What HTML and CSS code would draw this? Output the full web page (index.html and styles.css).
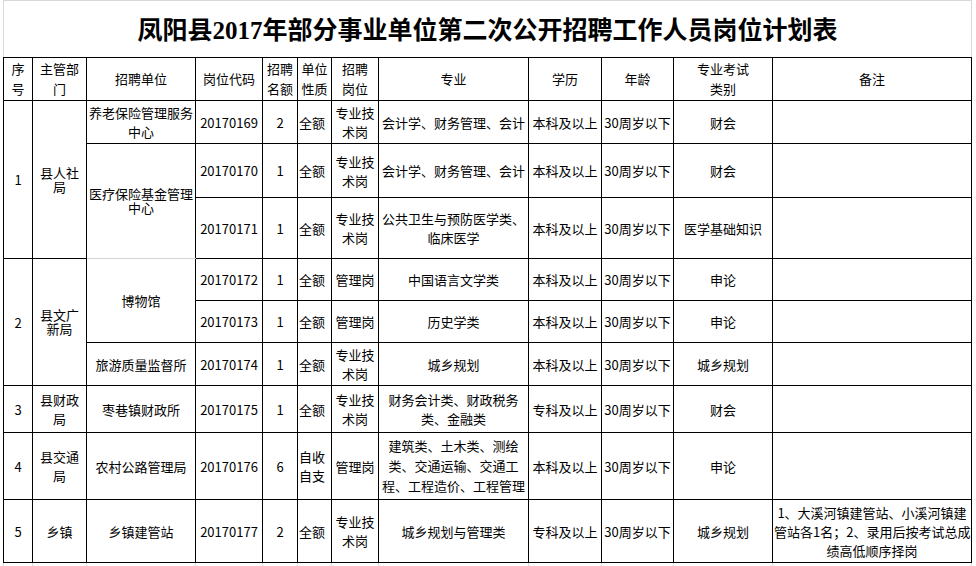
FILE: index.html
```html
<!DOCTYPE html>
<html lang="zh-CN">
<head>
<meta charset="utf-8">
<title>凤阳县2017年部分事业单位第二次公开招聘工作人员岗位计划表</title>
<link rel="stylesheet" href="styles.css">
</head>
<body>
<div class="sheet">
  <div class="title"><span class="title-text">凤阳县<span class="num">2017</span>年部分事业单位第二次公开招聘工作人员岗位计划表</span></div>
  <table class="plan">
    <colgroup>
      <col class="c1"><col class="c2"><col class="c3"><col class="c4"><col class="c5"><col class="c6">
      <col class="c7"><col class="c8"><col class="c9"><col class="c10"><col class="c11"><col class="c12">
    </colgroup>
    <tr class="h43 head">
      <td>序<br>号</td><td>主管部<br>门</td><td>招聘单位</td><td>岗位代码</td><td>招聘<br>名额</td><td>单位<br>性质</td>
      <td>招聘<br>岗位</td><td>专业</td><td>学历</td><td>年龄</td><td>专业考试<br>类别</td><td>备注</td>
    </tr>
    <tr class="h43">
      <td rowspan="3">1</td><td rowspan="3" class="tight">县人社<br>局</td><td>养老保险管理服务<br>中心</td>
      <td>20170169</td><td>2</td><td class="left">全额</td><td>专业技<br>术岗</td><td>会计学、财务管理、会计</td>
      <td>本科及以上</td><td>30周岁以下</td><td>财会</td><td></td>
    </tr>
    <tr class="h54">
      <td rowspan="2" class="tight soft-bottom">医疗保险基金管理<br>中心</td>
      <td>20170170</td><td>1</td><td class="left">全额</td><td>专业技<br>术岗</td><td>会计学、财务管理、会计</td>
      <td>本科及以上</td><td>30周岁以下</td><td>财会</td><td></td>
    </tr>
    <tr class="h61">
      <td>20170171</td><td>1</td><td class="left">全额</td><td>专业技<br>术岗</td><td>公共卫生与预防医学类、<br>临床医学</td>
      <td>本科及以上</td><td>30周岁以下</td><td>医学基础知识</td><td></td>
    </tr>
    <tr class="h42">
      <td rowspan="3">2</td><td rowspan="3" class="tight">县文广<br>新局</td><td rowspan="2">博物馆</td>
      <td>20170172</td><td>1</td><td class="left">全额</td><td>管理岗</td><td>中国语言文学类</td>
      <td>本科及以上</td><td>30周岁以下</td><td>申论</td><td></td>
    </tr>
    <tr class="h42">
      <td>20170173</td><td>1</td><td class="left">全额</td><td>管理岗</td><td>历史学类</td>
      <td>本科及以上</td><td>30周岁以下</td><td>申论</td><td></td>
    </tr>
    <tr class="h43">
      <td>旅游质量监督所</td>
      <td>20170174</td><td>1</td><td class="left">全额</td><td>专业技<br>术岗</td><td>城乡规划</td>
      <td>本科及以上</td><td>30周岁以下</td><td>城乡规划</td><td></td>
    </tr>
    <tr class="h47">
      <td>3</td><td>县财政<br>局</td><td>枣巷镇财政所</td>
      <td>20170175</td><td>1</td><td class="left">全额</td><td>专业技<br>术岗</td><td>财务会计类、财政税务<br>类、金融类</td>
      <td>专科及以上</td><td>30周岁以下</td><td>财会</td><td></td>
    </tr>
    <tr class="h67">
      <td>4</td><td>县交通<br>局</td><td>农村公路管理局</td>
      <td>20170176</td><td>6</td><td class="left">自收<br>自支</td><td>管理岗</td>
      <td class="multi">建筑类、土木类、测绘<br>类、交通运输、交通工<br>程、工程造价、工程管理</td>
      <td>本科及以上</td><td>30周岁以下</td><td>申论</td><td></td>
    </tr>
    <tr class="h63">
      <td>5</td><td>乡镇</td><td>乡镇建管站</td>
      <td>20170177</td><td>2</td><td class="left">全额</td><td>专业技<br>术岗</td><td>城乡规划与管理类</td>
      <td>专科及以上</td><td>30周岁以下</td><td>城乡规划</td>
      <td class="note">1、大溪河镇建管站、小溪河镇建<br>管站各1名；2、录用后按考试总成<br>绩高低顺序择岗</td>
    </tr>
    <tr class="ghost">
      <td></td><td></td><td></td><td></td><td></td><td></td><td></td><td></td><td></td><td></td><td></td><td></td>
    </tr>
  </table>
</div>
</body>
</html>
```

FILE: styles.css
```css
html, body {
  margin: 0;
  padding: 0;
  background: #ffffff;
}

body {
  font-family: "Noto Sans CJK SC", "Noto Sans", sans-serif;
  font-size: 13px;
  color: #000000;
}

.sheet {
  padding-left: 3px;
  width: 969px;
}

.title {
  box-sizing: border-box;
  width: 969px;
  height: 57px;
  border-top: 1px solid #d8d8d8;
  border-left: 1px solid #d8d8d8;
  border-right: 1px solid #d8d8d8;
  display: flex;
  align-items: center;
  justify-content: center;
}

.title-text {
  font-family: "Noto Sans CJK SC", sans-serif;
  font-weight: 700;
  font-size: 25px;
  line-height: 30px;
  padding-top: 1px;
}

.title-text .num {
  font-family: "Liberation Serif", serif;
  font-weight: 700;
}

.plan {
  border-collapse: collapse;
  table-layout: fixed;
  width: 969px;
}

.c1 { width: 29px; }
.c2 { width: 54px; }
.c3 { width: 109px; }
.c4 { width: 67px; }
.c5 { width: 35px; }
.c6 { width: 34px; }
.c7 { width: 47px; }
.c8 { width: 150px; }
.c9 { width: 73px; }
.c10 { width: 72px; }
.c11 { width: 99px; }
.c12 { width: 199px; }

.plan td {
  border: 1px solid #000000;
  padding: 0 1px;
  text-align: center;
  vertical-align: middle;
  line-height: 19px;
  white-space: nowrap;
  overflow: hidden;
}

.plan .head td {
  line-height: 20px;
}

.plan td.left {
  text-align: left;
  padding-left: 1px;
}

.plan td.tight {
  line-height: 14px;
}

.plan td.multi {
  line-height: 20px;
}

.plan td.soft-bottom {
  border-bottom-color: #d4d4d4;
}

.h42 { height: 42px; }
.h43 { height: 43px; }
.h47 { height: 47px; }
.h54 { height: 54px; }
.h61 { height: 61px; }
.h63 { height: 63px; }
.h67 { height: 67px; }

.plan .ghost td {
  height: 3px;
  padding: 0;
  line-height: 0;
  border-top: none;
  border-bottom: none;
  border-left: 1px solid #dadada;
  border-right: 1px solid #dadada;
}
```
